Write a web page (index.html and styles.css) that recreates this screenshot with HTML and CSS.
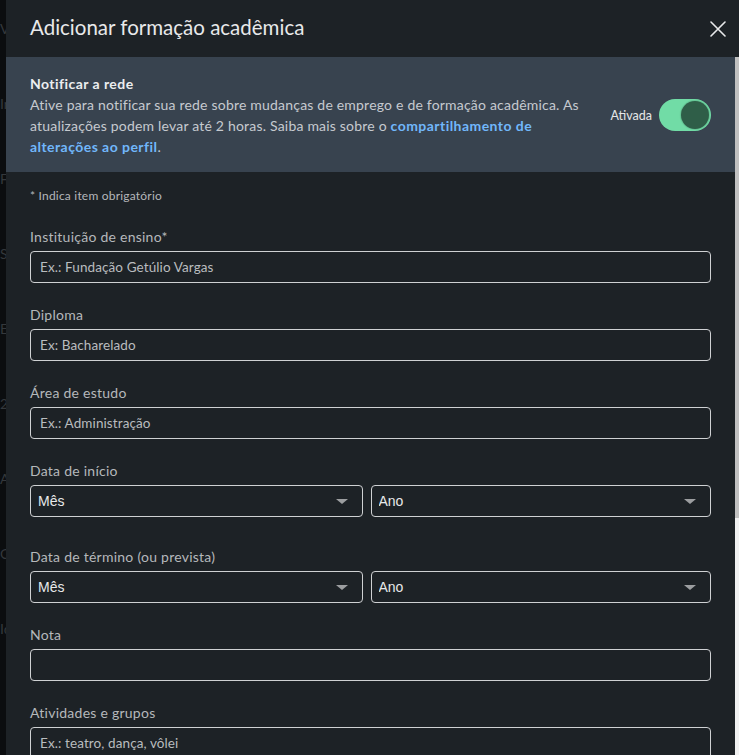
FILE: index.html
```html
<!DOCTYPE html>
<html lang="pt-BR">
<head>
<meta charset="utf-8">
<title>Adicionar formação acadêmica</title>
<link rel="stylesheet" href="styles.css">
</head>
<body>
<div class="page" aria-hidden="true">
  <p class="page-line">Você</p>
  <p class="page-line">Início</p>
  <p class="page-line">Formação</p>
  <p class="page-line">Sobre</p>
  <p class="page-line">Experiência</p>
  <p class="page-line">2022</p>
  <p class="page-line">Atividades</p>
  <p class="page-line">Cursos</p>
  <p class="page-line">Idiomas</p>
</div>

<div class="overlay">
  <div class="modal" role="dialog" aria-labelledby="modal-title">
    <header class="modal-header">
      <h2 id="modal-title" class="modal-title">Adicionar formação acadêmica</h2>
      <button class="close-btn" aria-label="Fechar">
        <svg width="16" height="16" viewBox="0 0 16 16"><path d="M1 1 L15 15 M15 1 L1 15" stroke="#e8e9ea" stroke-width="1.6" stroke-linecap="round" fill="none"/></svg>
      </button>
    </header>

    <div class="modal-main">
      <div class="modal-scroll">
        <section class="notify">
          <div class="notify-text">
            <div class="notify-title">Notificar a rede</div>
            <p class="notify-desc">Ative para notificar sua rede sobre mudanças de emprego e de formação acadêmica. As atualizações podem levar até 2 horas. Saiba mais sobre o <a class="link" href="#">compartilhamento de alterações ao perfil</a>.</p>
          </div>
          <div class="toggle-wrap">
            <span class="toggle-label">Ativada</span>
            <span class="toggle" role="switch" aria-checked="true"><span class="knob"></span></span>
          </div>
        </section>

        <form class="form">
          <p class="required-note">* Indica item obrigatório</p>

          <div class="field">
            <label class="label" for="escola">Instituição de ensino*</label>
            <input class="input" id="escola" type="text" placeholder="Ex.: Fundação Getúlio Vargas">
          </div>

          <div class="field">
            <label class="label" for="diploma">Diploma</label>
            <input class="input" id="diploma" type="text" placeholder="Ex: Bacharelado">
          </div>

          <div class="field">
            <label class="label" for="area">Área de estudo</label>
            <input class="input" id="area" type="text" placeholder="Ex.: Administração">
          </div>

          <div class="field field-date">
            <span class="label">Data de início</span>
            <div class="date-row">
              <div class="date-col">
                <div class="select-wrap"><select class="select" aria-label="Mês de início"><option>Mês</option></select></div>
              </div>
              <div class="date-col">
                <div class="select-wrap"><select class="select" aria-label="Ano de início"><option>Ano</option></select></div>
              </div>
            </div>
          </div>

          <div class="field">
            <span class="label">Data de término (ou prevista)</span>
            <div class="date-row">
              <div class="date-col">
                <div class="select-wrap"><select class="select" aria-label="Mês de término"><option>Mês</option></select></div>
              </div>
              <div class="date-col">
                <div class="select-wrap"><select class="select" aria-label="Ano de término"><option>Ano</option></select></div>
              </div>
            </div>
          </div>

          <div class="field">
            <label class="label" for="nota">Nota</label>
            <input class="input" id="nota" type="text">
          </div>

          <div class="field">
            <label class="label" for="atividades">Atividades e grupos</label>
            <input class="input" id="atividades" type="text" placeholder="Ex.: teatro, dança, vôlei">
          </div>
        </form>
      </div>
      <div class="scrollbar" aria-hidden="true"><div class="scrollbar-thumb"></div></div>
    </div>
  </div>
</div>
</body>
</html>
```
FILE: styles.css
```css
html, body {
  margin: 0;
  height: 100%;
}

body {
  background: #0b0d0f;
  font-family: Lato, "Liberation Sans", sans-serif;
  overflow: hidden;
}

/* faint page behind the dialog */
.page {
  padding: 20px 0 0 0;
  color: #34383c;
  font-size: 14px;
}

.page-line {
  margin: 0 0 58px 0;
}

/* dialog */
.overlay {
  position: fixed;
  inset: 0 0 0 6px;
  display: flex;
}

.modal {
  flex: 1;
  min-width: 0;
  display: flex;
  flex-direction: column;
  background: #1d2226;
}

.modal-header {
  flex: none;
  height: 57px;
  box-sizing: border-box;
  display: flex;
  align-items: center;
  justify-content: space-between;
  padding: 0 5px 4px 24px;
}

.modal-title {
  margin: 0;
  font-size: 20.5px;
  font-weight: 400;
  color: #e8e9ea;
}

.close-btn {
  width: 32px;
  height: 32px;
  margin-top: 4px;
  padding: 0;
  border: 0;
  background: none;
  display: flex;
  align-items: center;
  justify-content: center;
  cursor: pointer;
}

.modal-main {
  flex: 1;
  min-height: 0;
  display: flex;
}

.modal-scroll {
  flex: 1;
  min-width: 0;
  overflow: hidden;
}

.scrollbar {
  flex: none;
  width: 4px;
  background: #f1f1f1;
}

.scrollbar-thumb {
  height: 461px;
  background: #c1c1c1;
}

/* notify band */
.notify {
  background: #38434f;
  padding: 16px 24px 15px;
  display: flex;
  align-items: center;
  gap: 24px;
}

.notify-text {
  flex: 1;
  min-width: 0;
  font-size: 14px;
  line-height: 21px;
}

.notify-title {
  font-weight: 700;
  letter-spacing: 0.45px;
  color: #eceef0;
}

.notify-desc {
  margin: 0;
  color: #c6cacf;
  letter-spacing: 0.2px;
}

.link {
  color: #71b7fb;
  font-weight: 700;
  letter-spacing: 0.45px;
  text-decoration: none;
}

.toggle-wrap {
  flex: none;
  display: flex;
  align-items: center;
  gap: 7px;
}

.toggle-label {
  font-size: 12.5px;
  color: #e6e7e8;
}

.toggle {
  width: 52px;
  height: 32px;
  box-sizing: border-box;
  padding: 0 2px;
  border-radius: 16px;
  background: #71dca6;
  display: flex;
  align-items: center;
  justify-content: flex-end;
}

.knob {
  width: 28px;
  height: 28px;
  border-radius: 50%;
  background: #2f5e48;
  box-shadow: 0 0 1px 1px rgba(0, 0, 0, 0.12);
}

/* form */
.form {
  padding: 15px 24px 24px;
}

.required-note {
  margin: 0;
  font-size: 12px;
  line-height: 18px;
  letter-spacing: 0.2px;
  color: #b4b7ba;
}

.field {
  margin-top: 22px;
}

.field-date {
  padding-bottom: 8px;
}

.label {
  display: block;
  font-size: 14px;
  line-height: 20px;
  letter-spacing: 0.25px;
  color: #b5b8bb;
  margin-bottom: 4px;
}

.input {
  display: block;
  width: 100%;
  height: 32px;
  box-sizing: border-box;
  margin: 0;
  padding: 0 9px;
  border: 1px solid #cfd1d3;
  border-radius: 4px;
  background: transparent;
  font-family: Lato, "Liberation Sans", sans-serif;
  font-size: 13.5px;
  letter-spacing: 0.1px;
  color: #e8e9ea;
  outline: none;
}

.input::placeholder {
  color: #b9bcbf;
}

.date-row {
  display: flex;
}

.date-col {
  width: 50%;
  box-sizing: border-box;
}

.date-col:first-child {
  padding-right: 8px;
}

.select-wrap {
  position: relative;
}

.select-wrap::after {
  content: "";
  position: absolute;
  right: 15px;
  top: 14px;
  border-left: 6px solid transparent;
  border-right: 6px solid transparent;
  border-top: 5px solid #9c9ea0;
  pointer-events: none;
}

.select {
  display: block;
  width: 100%;
  height: 32px;
  box-sizing: border-box;
  margin: 0;
  padding: 0 7px;
  border: 1px solid #cfd1d3;
  border-radius: 4px;
  background: transparent;
  font-family: "Liberation Sans", Arial, sans-serif;
  font-size: 14px;
  color: #e8e9ea;
  appearance: none;
  -webkit-appearance: none;
  outline: none;
}
```
